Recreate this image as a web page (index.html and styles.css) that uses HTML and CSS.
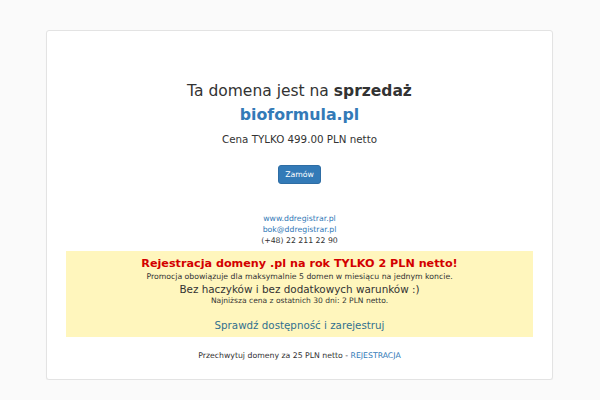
FILE: index.html
```html
<!DOCTYPE html>
<html lang="pl">
<head>
<meta charset="utf-8">
<title>bioformula.pl</title>
<link rel="stylesheet" href="styles.css">
</head>
<body>
<div class="card">
  <h1 class="title">Ta domena jest na <strong>sprzedaż</strong></h1>
  <h2 class="domain">bioformula.pl</h2>
  <p class="price">Cena TYLKO 499.00 PLN netto</p>
  <div class="actions"><a class="btn" href="#">Zamów</a></div>
  <div class="contact">
    <a href="#">www.ddregistrar.pl</a>
    <a href="#">bok@ddregistrar.pl</a>
    <span>(+48) 22 211 22 90</span>
  </div>
  <div class="promo">
    <div class="promo-head">Rejestracja domeny .pl na rok TYLKO 2 PLN netto!</div>
    <div class="promo-small">Promocja obowiązuje dla maksymalnie 5 domen w miesiącu na jednym koncie.</div>
    <div class="promo-mid">Bez haczyków i bez dodatkowych warunków :)</div>
    <div class="promo-tiny">Najniższa cena z ostatnich 30 dni: 2 PLN netto.</div>
    <a class="promo-link" href="#">Sprawdź dostępność i zarejestruj</a>
  </div>
  <p class="footer">Przechwytuj domeny za 25 PLN netto - <a href="#">REJESTRACJA</a></p>
</div>
</body>
</html>
```
FILE: styles.css
```css
html, body {
  margin: 0;
  padding: 0;
}
body {
  background: #fafafa;
  font-family: "DejaVu Sans", sans-serif;
  color: #333;
}
a {
  color: #337ab7;
  text-decoration: none;
}
.card {
  box-sizing: border-box;
  width: 507px;
  height: 350px;
  margin: 30px 0 0 46px;
  background: #fff;
  border: 1px solid #e3e3e3;
  border-radius: 3px;
  box-shadow: 0 1px 1px rgba(0,0,0,0.05);
  padding: 50px 19px 0;
  text-align: center;
}
.title {
  margin: 0;
  font-size: 15.5px;
  font-weight: normal;
  line-height: 20px;
  color: #333;
}
.title strong {
  font-weight: bold;
}
.domain {
  margin: 0;
  font-size: 15.8px;
  line-height: 27px;
  color: #337ab7;
  font-weight: bold;
}
.price {
  margin: 4px 0 0;
  font-size: 10.3px;
  line-height: 14px;
}
.actions {
  margin-top: 19px;
  display: flex;
  justify-content: center;
}
.btn {
  display: block;
  box-sizing: border-box;
  height: 19px;
  padding: 0 6px;
  line-height: 17px;
  font-size: 7.75px;
  color: #fff;
  background: #337ab7;
  border: 1px solid #2e6da4;
  border-radius: 3px;
}
.contact {
  margin-top: 29px;
  display: flex;
  flex-direction: column;
  align-items: center;
  font-size: 7.75px;
  line-height: 11px;
}
.contact span {
  color: #333;
}
.promo {
  margin: 5px 0 0;
  background: #fff6bd;
  padding: 5px 10px;
}
.promo-head {
  color: #d30000;
  font-weight: bold;
  font-size: 11.2px;
  line-height: 15px;
}
.promo-small {
  font-size: 7.75px;
  line-height: 12px;
}
.promo-mid {
  font-size: 10.4px;
  line-height: 13px;
}
.promo-tiny {
  font-size: 7.55px;
  line-height: 10px;
}
.promo-link {
  display: block;
  margin-top: 12px;
  font-size: 10.3px;
  line-height: 14px;
  color: #31708f;
}
.footer {
  margin: 13px 0 0;
  font-size: 7.75px;
  line-height: 11px;
}
```
